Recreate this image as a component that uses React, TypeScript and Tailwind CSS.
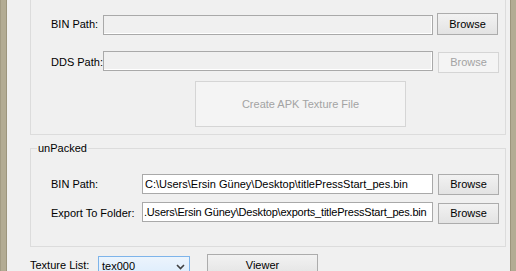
import React from "react";

const font = "font-['Liberation_Sans',Arial,sans-serif] text-[11px] leading-[13px]";

function Button({ label, className = "", disabled = false }: { label: string; className?: string; disabled?: boolean }) {
  return (
    <div
      className={`flex items-center justify-center border ${
        disabled
          ? "border-[#d5d5d5] bg-[#f4f4f4] text-[#a3a3a3]"
          : "border-[#acacac] bg-gradient-to-b from-[#f2f2f2] to-[#e3e3e3] text-black"
      } ${className}`}
    >
      {label}
    </div>
  );
}

export default function App() {
  return (
    <div className={`flex h-[271px] w-[516px] overflow-hidden bg-[#f0f0f0] ${font}`}>
      {/* left window frame */}
      <div className="w-[7px] shrink-0 border-l border-r border-l-[#a39c84] border-r-[#9c957d] bg-[#b3ac94]" />

      <div className="flex-1 flex flex-col text-black">
        {/* packed group (top cut off) */}
        <div className="ml-[23px] mr-[4px] h-[135px] shrink-0 border-x border-b border-[#dcdcdc] pl-[20px] flex flex-col">
          <div className="mt-[13px] flex h-[22px] items-center">
            <span className="w-[52px]">BIN Path:</span>
            <div className="self-end h-[20px] w-[330px] border border-[#a9a9a9] bg-[#f0f0f0] shadow-[inset_-1px_-1px_0_#ffffff]" />
            <Button label="Browse" className="ml-[4px] h-[22px] w-[61px]" />
          </div>
          <div className="mt-[16px] flex h-[22px] items-center">
            <span className="w-[52px]">DDS Path:</span>
            <div className="self-start h-[20px] w-[330px] border border-[#a9a9a9] bg-[#f0f0f0] shadow-[inset_-1px_-1px_0_#ffffff]" />
            <Button label="Browse" disabled className="self-end ml-[5px] h-[21px] w-[61px]" />
          </div>
          <Button label="Create APK Texture File" disabled className="mt-[8px] ml-[144px] h-[46px] w-[211px]" />
        </div>

        {/* unPacked group */}
        <div className="relative mt-[13px] ml-[23px] mr-[4px] h-[99px] shrink-0 border border-[#dcdcdc] pl-[20px] flex flex-col">
          <span className="absolute left-[6px] top-[-7px] bg-[#f0f0f0] px-[1px]">unPacked</span>
          <div className="mt-[25px] flex h-[21px] items-center">
            <span className="w-[91px]">BIN Path:</span>
            <div className="self-start flex h-[20px] w-[291px] items-center overflow-hidden whitespace-nowrap border border-[#a9a9a9] bg-white px-[2px]">
              C:\Users\Ersin Güney\Desktop\titlePressStart_pes.bin
            </div>
            <Button label="Browse" className="ml-[5px] h-[21px] w-[61px]" />
          </div>
          <div className="mt-[7px] flex h-[22px] items-center">
            <span className="w-[91px]">Export To Folder:</span>
            <div className="self-start flex h-[20px] w-[291px] items-center overflow-hidden whitespace-nowrap border border-[#a9a9a9] bg-white pl-[1px] tracking-[-0.2px]">
              .Users\Ersin Güney\Desktop\exports_titlePressStart_pes.bin
            </div>
            <Button label="Browse" className="self-end ml-[5px] h-[21px] w-[61px]" />
          </div>
        </div>

        {/* texture list row */}
        <div className="mt-[7px] ml-[23px] flex items-start">
          <span className="mt-[5px] w-[68px]">Texture List:</span>
          <div className="mt-[2px] flex h-[21px] w-[92px] items-center justify-between border border-[#7eb4ea] bg-gradient-to-b from-[#ecf4fc] to-[#dcecfc] pl-[3px] pr-[4px]">
            <span>tex000</span>
            <svg width="9" height="6" viewBox="0 0 9 6">
              <polyline points="1,1 4.5,4.5 8,1" fill="none" stroke="#404040" strokeWidth="1.6" />
            </svg>
          </div>
          <Button label="Viewer" className="ml-[17px] h-[23px] w-[111px]" />
        </div>
      </div>

      {/* right window frame */}
      <div className="w-[6px] shrink-0 border-l border-[#9c957d] bg-[#b3ac94]" />
    </div>
  );
}
